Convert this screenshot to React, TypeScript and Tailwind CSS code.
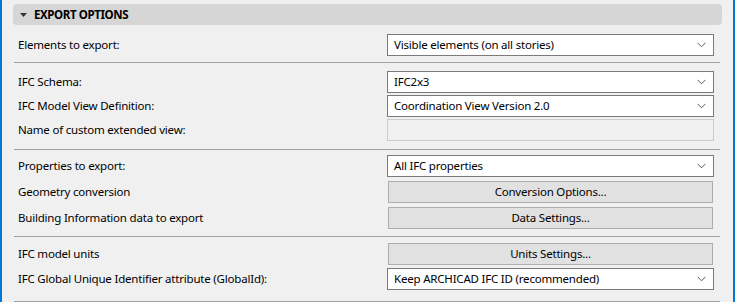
import React from 'react';

const FONT = { fontFamily: '"Noto Sans", "Open Sans", sans-serif' };

function Chevron() {
  return (
    <svg width="9" height="6" viewBox="0 0 9 6" className="shrink-0">
      <path d="M0.5 0.8 L4.5 4.8 L8.5 0.8" fill="none" stroke="#5a5a5a" strokeWidth="1" />
    </svg>
  );
}

function Select({ value }: { value: string }) {
  return (
    <div className="flex h-[22px] w-[327px] items-center justify-between border border-[#7a7a7a] bg-white pl-[6px] pr-[7px] text-[11.5px] leading-none tracking-[-0.2px] text-black">
      <span>{value}</span>
      <Chevron />
    </div>
  );
}

function Button({ label }: { label: string }) {
  return (
    <div className="mx-[1px] flex h-[22px] w-[325px] items-center justify-center border border-[#adadad] bg-[#e1e1e1] text-[11.5px] leading-none tracking-[-0.2px] text-black">
      {label}
    </div>
  );
}

function Row({ label, children, className = '' }: { label: string; children: React.ReactNode; className?: string }) {
  return (
    <div className={`flex items-center justify-between pl-[16px] pr-[19px] ${className}`}>
      <span className="text-[11.5px] leading-none tracking-[-0.2px] text-black">{label}</span>
      {children}
    </div>
  );
}

function Separator({ className = '' }: { className?: string }) {
  return <div className={`ml-[12px] h-px w-[706px] bg-[#a0a0a0] ${className}`} />;
}

export default function App() {
  return (
    <div
      className="h-[302px] w-[735px] overflow-hidden border-x-2 border-[#0078d7] bg-[#f0f0f0]"
      style={FONT}
    >
      <div className="ml-[11px] mt-[4px] flex h-[21px] w-[709px] items-center rounded-[4px] bg-[#d6d6d6] pl-[7px]">
        <svg width="7" height="4" viewBox="0 0 7 4" className="mr-[7px]">
          <path d="M0 0 L7 0 L3.5 4 Z" fill="#333" />
        </svg>
        <span className="text-[11.5px] font-bold leading-none tracking-[-0.4px] text-black">EXPORT OPTIONS</span>
      </div>

      <Row label="Elements to export:" className="mt-[9px]">
        <Select value="Visible elements (on all stories)" />
      </Row>
      <Separator className="mt-[6px]" />

      <Row label="IFC Schema:" className="mt-[8px]">
        <Select value="IFC2x3" />
      </Row>
      <Row label="IFC Model View Definition:" className="mt-[2px]">
        <Select value="Coordination View Version 2.0" />
      </Row>
      <Row label="Name of custom extended view:" className="mt-[2px]">
        <div className="h-[22px] w-[327px] border border-[#cccccc] bg-[#f0f0f0]" />
      </Row>
      <Separator className="mt-[8px]" />

      <Row label="Properties to export:" className="mt-[5px]">
        <Select value="All IFC properties" />
      </Row>
      <Row label="Geometry conversion" className="mt-[4px]">
        <Button label="Conversion Options..." />
      </Row>
      <Row label="Building Information data to export" className="mt-[4px]">
        <Button label="Data Settings..." />
      </Row>
      <Separator className="mt-[7px]" />

      <Row label="IFC model units" className="mt-[6px]">
        <Button label="Units Settings..." />
      </Row>
      <Row label="IFC Global Unique Identifier attribute (GlobalId):" className="mt-[3px]">
        <Select value="Keep ARCHICAD IFC ID (recommended)" />
      </Row>
      <Separator className="mt-[11px]" />
    </div>
  );
}
